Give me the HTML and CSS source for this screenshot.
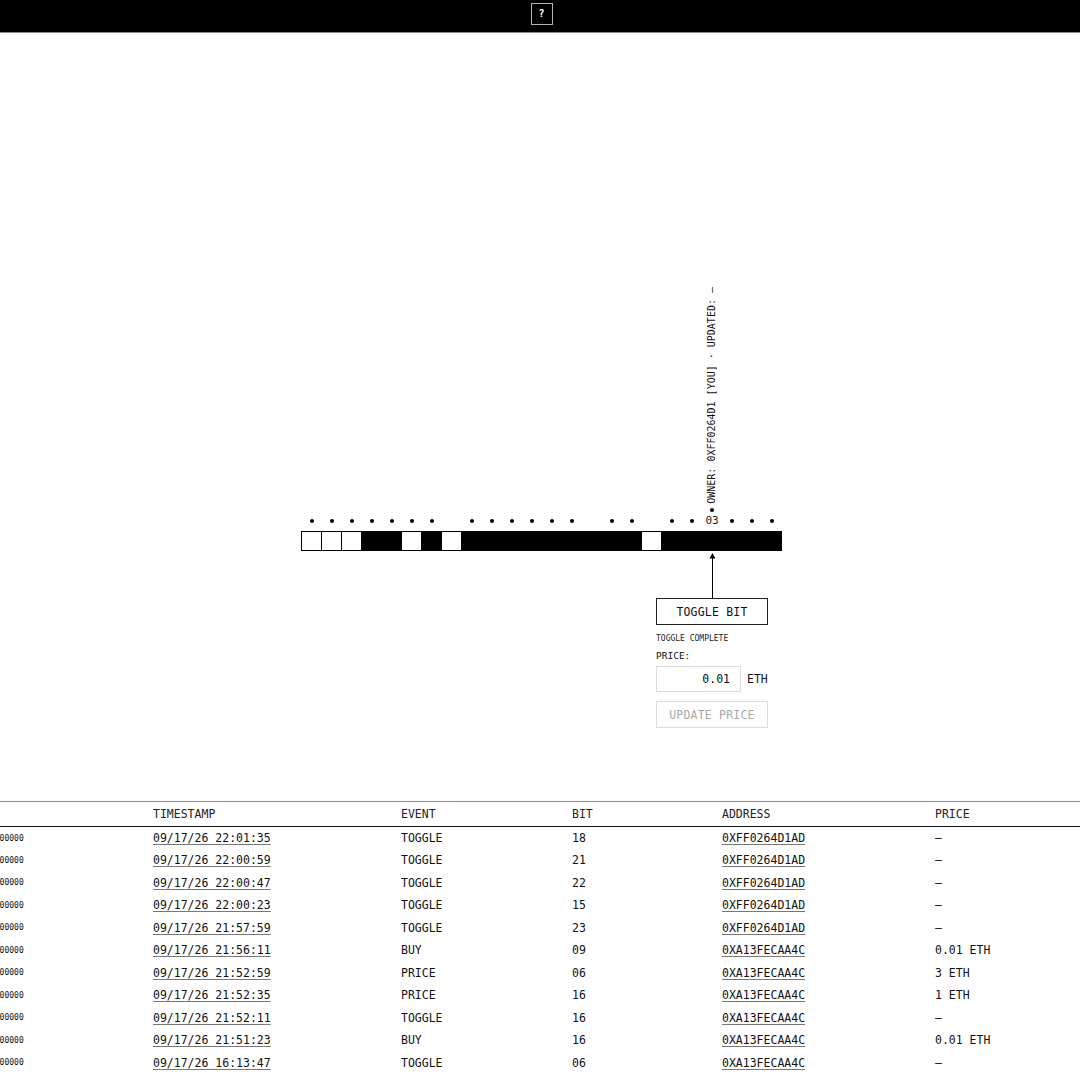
FILE: index.html
```html
<!DOCTYPE html>
<html lang="en">
<head>
<meta charset="utf-8">
<title>Bits</title>
<link rel="stylesheet" href="styles.css">
</head>
<body>
<header class="topbar">
  <button class="help" type="button">?</button>
</header>

<main class="stage">
  <div class="board">
    <div class="marks">
      <span class="slot"><i class="dot"></i></span>
      <span class="slot"><i class="dot"></i></span>
      <span class="slot"><i class="dot"></i></span>
      <span class="slot"><i class="dot"></i></span>
      <span class="slot"><i class="dot"></i></span>
      <span class="slot"><i class="dot"></i></span>
      <span class="slot"><i class="dot"></i></span>
      <span class="slot"></span>
      <span class="slot"><i class="dot"></i></span>
      <span class="slot"><i class="dot"></i></span>
      <span class="slot"><i class="dot"></i></span>
      <span class="slot"><i class="dot"></i></span>
      <span class="slot"><i class="dot"></i></span>
      <span class="slot"><i class="dot"></i></span>
      <span class="slot"></span>
      <span class="slot"><i class="dot"></i></span>
      <span class="slot"><i class="dot"></i></span>
      <span class="slot"></span>
      <span class="slot"><i class="dot"></i></span>
      <span class="slot"><i class="dot"></i></span>
      <span class="slot selected">
        <span class="label">03</span>
        <span class="meta">
          <i class="dot"></i>
          <span class="owner">OWNER: 0XFF0264D1 [YOU] · UPDATED: —</span>
        </span>
      </span>
      <span class="slot"><i class="dot"></i></span>
      <span class="slot"><i class="dot"></i></span>
      <span class="slot"><i class="dot"></i></span>
    </div>

    <div class="strip">
      <span class="cell off"></span>
      <span class="cell off"></span>
      <span class="cell off"></span>
      <span class="cell on"></span>
      <span class="cell on"></span>
      <span class="cell off"></span>
      <span class="cell on"></span>
      <span class="cell off"></span>
      <span class="cell on"></span>
      <span class="cell on"></span>
      <span class="cell on"></span>
      <span class="cell on"></span>
      <span class="cell on"></span>
      <span class="cell on"></span>
      <span class="cell on"></span>
      <span class="cell on"></span>
      <span class="cell on"></span>
      <span class="cell off"></span>
      <span class="cell on"></span>
      <span class="cell on"></span>
      <span class="cell on"></span>
      <span class="cell on"></span>
      <span class="cell on"></span>
      <span class="cell on"></span>
    </div>

    <div class="callout">
      <svg class="arrow" width="9" height="47" viewBox="0 0 9 47" aria-hidden="true">
        <polygon points="4.5,2 1.5,7.5 7.5,7.5" fill="#000"/>
        <line x1="4.5" y1="6" x2="4.5" y2="47" stroke="#000" stroke-width="1"/>
      </svg>
      <button class="btn" type="button">TOGGLE BIT</button>
      <div class="status">TOGGLE COMPLETE</div>
      <div class="field-label">PRICE:</div>
      <div class="price-row">
        <div class="price-input">0.01</div>
        <span class="unit">ETH</span>
      </div>
      <button class="btn disabled" type="button">UPDATE PRICE</button>
    </div>
  </div>
</main>

<section class="log">
  <table class="events">
    <colgroup>
      <col class="c-hash">
      <col class="c-time">
      <col class="c-event">
      <col class="c-bit">
      <col class="c-addr">
      <col class="c-price">
    </colgroup>
    <thead>
      <tr><th class="hash">TX</th><th>TIMESTAMP</th><th>EVENT</th><th>BIT</th><th>ADDRESS</th><th>PRICE</th></tr>
    </thead>
    <tbody>
      <tr><td class="hash">0X0000000000000000</td><td><a>09/17/26 22:01:35</a></td><td>TOGGLE</td><td>18</td><td><a>0XFF0264D1AD</a></td><td>—</td></tr>
      <tr><td class="hash">0X0000000000000000</td><td><a>09/17/26 22:00:59</a></td><td>TOGGLE</td><td>21</td><td><a>0XFF0264D1AD</a></td><td>—</td></tr>
      <tr><td class="hash">0X0000000000000000</td><td><a>09/17/26 22:00:47</a></td><td>TOGGLE</td><td>22</td><td><a>0XFF0264D1AD</a></td><td>—</td></tr>
      <tr><td class="hash">0X0000000000000000</td><td><a>09/17/26 22:00:23</a></td><td>TOGGLE</td><td>15</td><td><a>0XFF0264D1AD</a></td><td>—</td></tr>
      <tr><td class="hash">0X0000000000000000</td><td><a>09/17/26 21:57:59</a></td><td>TOGGLE</td><td>23</td><td><a>0XFF0264D1AD</a></td><td>—</td></tr>
      <tr><td class="hash">0X0000000000000000</td><td><a>09/17/26 21:56:11</a></td><td>BUY</td><td>09</td><td><a>0XA13FECAA4C</a></td><td>0.01 ETH</td></tr>
      <tr><td class="hash">0X0000000000000000</td><td><a>09/17/26 21:52:59</a></td><td>PRICE</td><td>06</td><td><a>0XA13FECAA4C</a></td><td>3 ETH</td></tr>
      <tr><td class="hash">0X0000000000000000</td><td><a>09/17/26 21:52:35</a></td><td>PRICE</td><td>16</td><td><a>0XA13FECAA4C</a></td><td>1 ETH</td></tr>
      <tr><td class="hash">0X0000000000000000</td><td><a>09/17/26 21:52:11</a></td><td>TOGGLE</td><td>16</td><td><a>0XA13FECAA4C</a></td><td>—</td></tr>
      <tr><td class="hash">0X0000000000000000</td><td><a>09/17/26 21:51:23</a></td><td>BUY</td><td>16</td><td><a>0XA13FECAA4C</a></td><td>0.01 ETH</td></tr>
      <tr><td class="hash">0X0000000000000000</td><td><a>09/17/26 16:13:47</a></td><td>TOGGLE</td><td>06</td><td><a>0XA13FECAA4C</a></td><td>—</td></tr>
    </tbody>
  </table>
</section>
</body>
</html>
```

FILE: styles.css
```css
* { box-sizing: border-box; }

html, body {
  margin: 0;
  padding: 0;
  background: #fff;
  color: #111;
  font-family: "DejaVu Sans Mono", "Liberation Mono", monospace;
  overflow: hidden;
}

/* top bar */
.topbar {
  height: 33px;
  background: #000;
  border-bottom: 1px solid #8a8a8a;
  display: flex;
  justify-content: center;
  align-items: flex-start;
  padding: 3px 0 0 3px;
}

.help {
  width: 22px;
  height: 22px;
  margin: 0;
  padding: 0;
  background: #000;
  color: #fff;
  border: 1px solid #b5b5b5;
  font-family: "DejaVu Sans Mono", monospace;
  font-size: 10px;
  font-weight: bold;
  line-height: 20px;
  text-align: center;
}

/* stage */
.stage {
  height: 768px;
  padding-top: 480px;
  padding-left: 3px;
  display: flex;
  justify-content: center;
  align-items: flex-start;
}

.board {
  position: relative;
  width: 481px;
}

.marks {
  display: flex;
  height: 14px;
  padding-left: 1px;
  margin-bottom: 4px;
  margin-top: 1px;
}

.slot {
  position: relative;
  width: 20px;
  height: 14px;
  display: flex;
  align-items: center;
  justify-content: center;
}

.dot {
  display: block;
  width: 4px;
  height: 4px;
  border-radius: 50%;
  background: #000;
}

.label {
  font-size: 11px;
  line-height: 14px;
  color: #222;
}

.meta {
  position: absolute;
  bottom: 100%;
  left: 50%;
  transform: translateX(-50%);
  display: flex;
  flex-direction: column-reverse;
  align-items: center;
  gap: 4px;
  padding-bottom: 2px;
}

.owner {
  writing-mode: vertical-rl;
  transform: rotate(180deg);
  font-size: 10px;
  line-height: 12px;
  white-space: nowrap;
  color: #111;
}

.strip {
  display: flex;
  width: 481px;
  margin-top: -1px;
  border: 1px solid #000;
  border-right: 0;
}

.cell {
  width: 20px;
  height: 18px;
  border-right: 1px solid #000;
}

.cell.on { background: #000; }
.cell.off { background: #fff; }

/* callout under the selected bit */
.callout {
  position: absolute;
  top: 100%;
  left: 411px;
  transform: translateX(-50%);
  width: 112px;
  display: flex;
  flex-direction: column;
}

.arrow {
  display: block;
  align-self: center;
}

.btn {
  display: block;
  width: 112px;
  height: 27px;
  margin: 0;
  padding: 0;
  background: #fff;
  color: #111;
  border: 1px solid #222;
  font-family: "DejaVu Sans Mono", monospace;
  font-size: 11.5px;
  letter-spacing: 0.2px;
  text-align: center;
}

.btn.disabled {
  margin-top: 9px;
  border-color: #dcdcdc;
  color: #a8a8a8;
}

.status {
  margin-top: 9px;
  font-size: 8px;
  line-height: 10px;
  color: #222;
  white-space: nowrap;
}

.field-label {
  margin-top: 6px;
  font-size: 9.5px;
  line-height: 12px;
  color: #111;
}

.price-row {
  margin-top: 4px;
  display: flex;
  align-items: center;
  gap: 6px;
}

.price-input {
  width: 85px;
  height: 26px;
  border: 1px solid #dcdcdc;
  padding-right: 10px;
  font-size: 11.5px;
  line-height: 24px;
  text-align: right;
  color: #111;
}

.unit {
  font-size: 11.5px;
  color: #111;
}

/* event log */
.log {
  overflow: hidden;
}

.events {
  width: 1220px;
  margin-left: -140px;
  table-layout: fixed;
  border-collapse: collapse;
  font-size: 11.5px;
}

.c-hash { width: 293px; }
.c-time { width: 248px; }
.c-event { width: 171px; }
.c-bit { width: 150px; }
.c-addr { width: 213px; }
.c-price { width: 145px; }

.events th {
  height: 25px;
  padding: 0;
  text-align: left;
  font-weight: normal;
  color: #222;
  border-top: 1px solid #8a8a8a;
  border-bottom: 1px solid #111;
  vertical-align: middle;
}

.events td {
  height: 22.5px;
  padding: 0;
  text-align: left;
  white-space: nowrap;
  vertical-align: middle;
  color: #111;
}

.events .hash {
  padding-left: 77px;
  font-size: 8px;
}

.events td a {
  color: #111;
  text-decoration: underline;
  text-decoration-color: #777;
  text-underline-offset: 2px;
}
```
